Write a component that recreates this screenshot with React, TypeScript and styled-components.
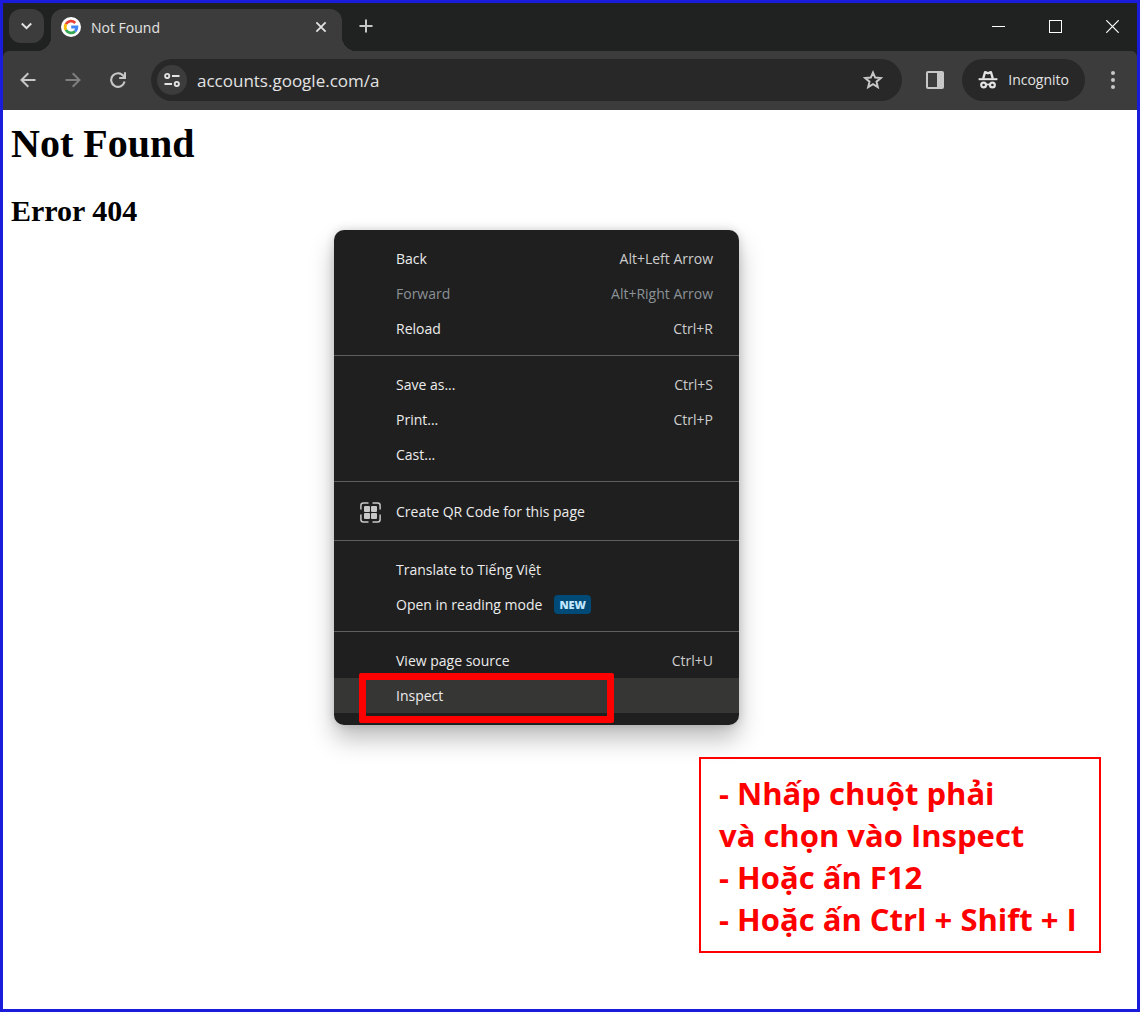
import React from "react";
import styled, { createGlobalStyle } from "styled-components";

const UI_FONT = '"Open Sans", "Noto Sans", sans-serif';

const GlobalStyle = createGlobalStyle`
  *, *::before, *::after { box-sizing: border-box; }
  body { margin: 0; background: #fff; }
  button, input { font-family: ${UI_FONT}; margin: 0; }
  button { border: 0; padding: 0; background: none; color: inherit; cursor: pointer; }
  svg { display: block; flex: none; }
`;

const Window = styled.div`
  display: flex;
  flex-direction: column;
  min-height: 100vh;
  border: 3px solid #1b1bdc;
  font-family: ${UI_FONT};
`;

const Chrome = styled.header`
  background: #202221;
  color: #e3e3e3;
`;

const TabStrip = styled.div`
  display: flex;
  align-items: flex-start;
  height: 48px;
  padding: 6px 0 0 6px;
`;

const TabSearch = styled.button`
  display: grid;
  place-items: center;
  width: 35px;
  height: 34px;
  margin-right: 7px;
  border-radius: 12px;
  background: #3c3c3c;
`;

const Tab = styled.div`
  position: relative;
  display: flex;
  align-items: center;
  gap: 10px;
  flex: 0 1 291px;
  height: 42px;
  padding: 0 11px 7px 10px;
  border-radius: 12px 12px 0 0;
  background: #3c3c3c;
  font-size: 14px;
  line-height: 20px;

  &::before,
  &::after {
    content: "";
    position: absolute;
    bottom: 0;
    width: 14px;
    height: 14px;
  }
  &::before {
    right: 100%;
    background: radial-gradient(circle at 0 0, transparent 14px, #3c3c3c 14px);
  }
  &::after {
    left: 100%;
    background: radial-gradient(circle at 100% 0, transparent 14px, #3c3c3c 14px);
  }
`;

const TabTitle = styled.span`
  flex: 1;
  padding-top: 2px;
  white-space: nowrap;
`;

const TabClose = styled.button`
  display: grid;
  place-items: center;
  width: 20px;
  height: 20px;
`;

const NewTab = styled.button`
  display: grid;
  place-items: center;
  width: 34px;
  height: 34px;
  margin-left: 7px;
`;

const WindowControls = styled.div`
  display: flex;
  gap: 7px;
  margin-left: auto;
`;

const WindowButton = styled.button`
  display: grid;
  place-items: center;
  width: 50px;
  height: 34px;
  color: #fff;
`;

const Toolbar = styled.div`
  display: flex;
  align-items: center;
  gap: 14px;
  padding: 8px 6px 9px;
  border-radius: 6px 6px 0 0;
  background: #3c3c3c;
`;

const ToolGroup = styled.div<{ $gap: number }>`
  display: flex;
  align-items: center;
  gap: ${(p) => p.$gap}px;
`;

const ToolButton = styled.button<{ $dim?: boolean }>`
  display: grid;
  place-items: center;
  width: 38px;
  height: 38px;
  border-radius: 50%;
  color: ${(p) => (p.$dim ? "#7f7f7f" : "#c7c7c7")};
`;

const AddressBar = styled.div`
  display: flex;
  align-items: center;
  flex: 1;
  min-width: 0;
  height: 42px;
  padding: 0 10px 0 6px;
  border-radius: 21px;
  background: #282828;
`;

const SiteInfo = styled.button`
  display: grid;
  place-items: center;
  width: 30px;
  height: 30px;
  border-radius: 50%;
  background: #3c3c3c;
  color: #e3e3e3;
`;

const Address = styled.input`
  flex: 1;
  min-width: 0;
  padding: 2px 10px 0;
  border: 0;
  outline: 0;
  background: transparent;
  color: #e3e3e3;
  font-size: 17px;
  line-height: 24px;
`;

const Incognito = styled.button`
  display: flex;
  align-items: center;
  gap: 10px;
  height: 42px;
  padding: 0 16px;
  border-radius: 21px;
  background: #282828;
  color: #e3e3e3;
  font-size: 14px;
  line-height: 20px;
`;

const Page = styled.main`
  position: relative;
  flex: 1;
  padding: 11px 8px;
  background: #fff;
  color: #000;
  font-family: "Liberation Serif", "Times New Roman", serif;
`;

const PageTitle = styled.h1`
  margin: 0 0 26px;
  font-size: 40px;
  line-height: 46px;
`;

const PageSubtitle = styled.h2`
  margin: 0;
  font-size: 30px;
  line-height: 36px;
`;

const ContextMenu = styled.div`
  position: absolute;
  top: 120px;
  left: 331px;
  width: 405px;
  padding: 11px 0 12px;
  border-radius: 10px;
  background: #1f1f1f;
  box-shadow: 0 14px 24px rgba(0, 0, 0, 0.26), 0 0 10px rgba(0, 0, 0, 0.16);
  font-family: ${UI_FONT};
`;

const MenuItem = styled.button<{ $tall?: boolean; $active?: boolean }>`
  position: relative;
  display: grid;
  grid-template-columns: 36px auto 1fr;
  align-items: center;
  width: 100%;
  height: ${(p) => (p.$tall ? 38 : 35)}px;
  padding: 0 26px;
  background: ${(p) => (p.$active ? "#363635" : "transparent")};
  color: #ececec;
  font-size: 14px;
  line-height: 20px;
  text-align: left;

  &:disabled {
    color: #8b9297;
    cursor: default;
  }
`;

const MenuLabel = styled.span`
  grid-column: 2;
  white-space: nowrap;
`;

const Shortcut = styled.span`
  grid-column: 3;
  justify-self: end;
  color: #cdcdcd;

  ${MenuItem}:disabled & {
    color: #8b9297;
  }
`;

const NewBadge = styled.span`
  grid-column: 3;
  justify-self: start;
  margin-left: 12px;
  padding: 0 5px;
  border-radius: 4px;
  background: #004a77;
  color: #c2e7ff;
  font-size: 11px;
  font-weight: 800;
  line-height: 19px;
`;

const Divider = styled.hr`
  height: 1px;
  margin: 9px 0 11px;
  border: 0;
  background: #5e5e5e;
`;

const Highlight = styled.span`
  position: absolute;
  top: -5px;
  left: 25px;
  width: 255px;
  height: 50px;
  border: 7px solid #ff0000;
  border-radius: 2px;
`;

const Note = styled.aside`
  position: absolute;
  right: 36px;
  bottom: 56px;
  width: 402px;
  padding: 13px 18px 11px;
  border: 2px solid #ff0000;
  color: #ff0000;
  font-family: ${UI_FONT};
  font-size: 31px;
  font-weight: 700;
  line-height: 42px;
`;

const NoteLine = styled.p`
  margin: 0;
  white-space: nowrap;
`;

const GoogleIcon = () => (
  <svg width="20" height="20" viewBox="0 0 20 20" aria-hidden="true">
    <circle cx="10" cy="10" r="10" fill="#fff" />
    <g fill="none" strokeWidth="2.8">
      <path d="M4.9 7.1A5.9 5.9 0 0 1 14.2 5.9" stroke="#ea4335" />
      <path d="M4.9 12.9A5.9 5.9 0 0 1 4.9 7.1" stroke="#fbbc05" />
      <path d="M14 14.4A5.9 5.9 0 0 1 4.9 12.9" stroke="#34a853" />
      <path d="M10.2 10H15.9A5.9 5.9 0 0 1 14 14.4" stroke="#4285f4" />
    </g>
  </svg>
);

const IncognitoIcon = () => (
  <svg width="20" height="20" viewBox="0 0 20 20" fill="none" stroke="currentColor" aria-hidden="true">
    <path d="M0.6 9.2H19.4" strokeWidth="2" />
    <path
      d="M5.2 8.6L6.9 2.6Q7.1 1.9 7.8 2.2L10 3.3L12.2 2.2Q12.9 1.9 13.1 2.6L14.8 8.6"
      strokeWidth="2.3"
    />
    <circle cx="5.6" cy="15" r="2.4" strokeWidth="2.2" />
    <circle cx="14.4" cy="15" r="2.4" strokeWidth="2.2" />
    <path d="M8 14.8Q10 13.8 12 14.8" strokeWidth="1.8" />
  </svg>
);

const QrIcon = () => (
  <svg width="21" height="21" viewBox="0 0 21 21" fill="none" stroke="#c7c7c7" strokeWidth="1.5" aria-hidden="true">
    <path d="M0.9 7.5V3.4Q0.9 0.9 3.4 0.9H8.5M12.5 0.9H17.6Q20.1 0.9 20.1 3.4V7.5M20.1 12.5V17.6Q20.1 20.1 17.6 20.1H12.5M8.5 20.1H3.4Q0.9 20.1 0.9 17.6V12.5" />
    <g fill="#c7c7c7" stroke="none">
      <rect x="4" y="4" width="6" height="6" rx="1" />
      <rect x="11" y="4" width="6" height="6" rx="1" />
      <rect x="4" y="11" width="6" height="6" rx="1" />
      <rect x="11" y="11" width="6" height="6" rx="1" />
    </g>
  </svg>
);

type Entry = { label: string; shortcut?: string; disabled?: boolean; isNew?: boolean; qr?: boolean; active?: boolean };

const menuGroups: Entry[][] = [
  [
    { label: "Back", shortcut: "Alt+Left Arrow" },
    { label: "Forward", shortcut: "Alt+Right Arrow", disabled: true },
    { label: "Reload", shortcut: "Ctrl+R" },
  ],
  [
    { label: "Save as...", shortcut: "Ctrl+S" },
    { label: "Print...", shortcut: "Ctrl+P" },
    { label: "Cast..." },
  ],
  [{ label: "Create QR Code for this page", qr: true }],
  [{ label: "Translate to Tiếng Việt" }, { label: "Open in reading mode", isNew: true }],
  [
    { label: "View page source", shortcut: "Ctrl+U" },
    { label: "Inspect", active: true },
  ],
];

const noteLines = ["- Nhấp chuột phải", "và chọn vào Inspect", "- Hoặc ấn F12", "- Hoặc ấn Ctrl + Shift + I"];

export default function App() {
  return (
    <>
      <GlobalStyle />
      <Window>
        <Chrome>
          <TabStrip>
            <TabSearch aria-label="Search tabs">
              <svg width="13" height="12" viewBox="0 0 13 12" fill="none" stroke="currentColor" strokeWidth="2">
                <path d="M1.8 3.5L6.5 8.2L11.2 3.5" />
              </svg>
            </TabSearch>
            <Tab>
              <GoogleIcon />
              <TabTitle>Not Found</TabTitle>
              <TabClose aria-label="Close tab">
                <svg width="12" height="12" viewBox="0 0 12 12" stroke="currentColor" strokeWidth="1.8">
                  <path d="M1.4 1.4L10.6 10.6M10.6 1.4L1.4 10.6" />
                </svg>
              </TabClose>
            </Tab>
            <NewTab aria-label="New tab">
              <svg width="14" height="14" viewBox="0 0 14 14" stroke="#c7c7c7" strokeWidth="2">
                <path d="M7 0.5V13.5M0.5 7H13.5" />
              </svg>
            </NewTab>
            <WindowControls>
              <WindowButton aria-label="Minimize">
                <svg width="13" height="13" viewBox="0 0 13 13" stroke="currentColor">
                  <path d="M0 6.5H13" />
                </svg>
              </WindowButton>
              <WindowButton aria-label="Maximize">
                <svg width="13" height="13" viewBox="0 0 13 13" fill="none" stroke="currentColor">
                  <rect x="0.5" y="0.5" width="12" height="12" />
                </svg>
              </WindowButton>
              <WindowButton aria-label="Close">
                <svg width="13" height="13" viewBox="0 0 13 13" stroke="currentColor" strokeWidth="1.2">
                  <path d="M0.3 0.3L12.7 12.7M12.7 0.3L0.3 12.7" />
                </svg>
              </WindowButton>
            </WindowControls>
          </TabStrip>
          <Toolbar>
            <ToolGroup $gap={7}>
              <ToolButton aria-label="Back">
                <svg width="16" height="16" viewBox="0 0 16 16" fill="none" stroke="currentColor" strokeWidth="2">
                  <path d="M15.5 8H2M8.3 1.2L1.5 8L8.3 14.8" />
                </svg>
              </ToolButton>
              <ToolButton aria-label="Forward" $dim>
                <svg width="16" height="16" viewBox="0 0 16 16" fill="none" stroke="currentColor" strokeWidth="2">
                  <path d="M0.5 8H14M7.7 1.2L14.5 8L7.7 14.8" />
                </svg>
              </ToolButton>
              <ToolButton aria-label="Reload">
                <svg width="16" height="16" viewBox="0 0 16 16" fill="none" stroke="currentColor" strokeWidth="2.1">
                  <path d="M14.6 9.6A6.8 6.8 0 1 1 13.6 4.2L14.6 5.6" />
                  <path d="M15 0.2V6H9.2" />
                </svg>
              </ToolButton>
            </ToolGroup>
            <AddressBar>
              <SiteInfo aria-label="View site information">
                <svg width="16" height="16" viewBox="0 0 16 16" fill="none" stroke="currentColor" strokeWidth="1.9">
                  <circle cx="3.2" cy="4" r="2.1" />
                  <path d="M8 4H15.5M0.5 12H8" />
                  <circle cx="12.8" cy="12" r="2.1" />
                </svg>
              </SiteInfo>
              <Address aria-label="Address" defaultValue="accounts.google.com/a" />
              <ToolButton aria-label="Bookmark this tab">
                <svg width="20" height="20" viewBox="0 0 20 20" fill="none" stroke="currentColor" strokeWidth="2">
                  <path d="M10 2.6L12.2 7.6L17.7 8.1L13.5 11.7L14.8 17.1L10 14.2L5.2 17.1L6.5 11.7L2.3 8.1L7.8 7.6Z" />
                </svg>
              </ToolButton>
            </AddressBar>
            <ToolGroup $gap={8}>
              <ToolButton aria-label="Side panel">
                <svg width="18" height="18" viewBox="0 0 18 18" aria-hidden="true">
                  <rect x="1" y="1" width="16" height="16" rx="1" fill="none" stroke="currentColor" strokeWidth="2" />
                  <rect x="11" y="1" width="6" height="16" fill="currentColor" />
                </svg>
              </ToolButton>
              <Incognito>
                <IncognitoIcon />
                Incognito
              </Incognito>
              <ToolButton aria-label="Menu">
                <svg width="18" height="18" viewBox="0 0 18 18" fill="currentColor">
                  <circle cx="10" cy="2" r="2" />
                  <circle cx="10" cy="9" r="2" />
                  <circle cx="10" cy="16" r="2" />
                </svg>
              </ToolButton>
            </ToolGroup>
          </Toolbar>
        </Chrome>
        <Page>
          <PageTitle>Not Found</PageTitle>
          <PageSubtitle>Error 404</PageSubtitle>
          <ContextMenu role="menu">
            {menuGroups.map((group, index) => (
              <React.Fragment key={index}>
                {index > 0 && <Divider />}
                {group.map((item) => (
                  <MenuItem key={item.label} role="menuitem" disabled={item.disabled} $tall={item.qr} $active={item.active}>
                    {item.qr && <QrIcon />}
                    <MenuLabel>{item.label}</MenuLabel>
                    {item.shortcut && <Shortcut>{item.shortcut}</Shortcut>}
                    {item.isNew && <NewBadge>NEW</NewBadge>}
                    {item.active && <Highlight />}
                  </MenuItem>
                ))}
              </React.Fragment>
            ))}
          </ContextMenu>
          <Note>
            {noteLines.map((line) => (
              <NoteLine key={line}>{line}</NoteLine>
            ))}
          </Note>
        </Page>
      </Window>
    </>
  );
}
